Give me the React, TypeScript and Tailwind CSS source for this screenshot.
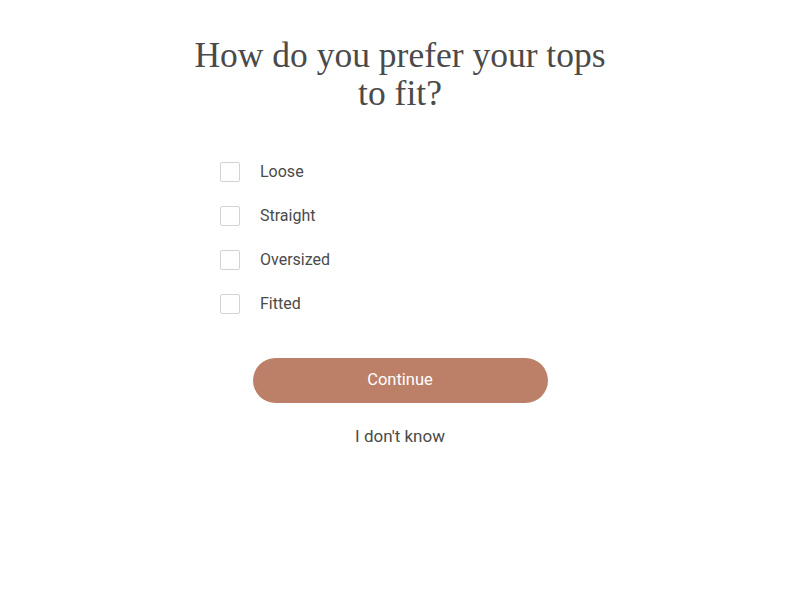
import React from "react";

const options = ["Loose", "Straight", "Oversized", "Fitted"];

export default function App() {
  return (
    <div className="min-h-[600px] w-full bg-white flex flex-col items-center text-[#4a4a4a]">
      <h1
        className="mt-[36px] w-[440px] text-center text-[35.5px] leading-[38px] text-[#4a4a4a]"
        style={{ fontFamily: '"Liberation Serif", serif' }}
      >
        How do you prefer your tops
        <br />
        to fit?
      </h1>
      <div
        className="mt-[50px] w-[360px] flex flex-col gap-[24px]"
        style={{ fontFamily: "Roboto, sans-serif" }}
      >
        {options.map((o) => (
          <label key={o} className="flex items-center h-[20px] cursor-pointer">
            <span className="w-[20px] h-[20px] border border-[#d3d3d3] rounded-[2px] bg-white" />
            <span className="ml-[20px] text-[16px] text-[#4a4a4a]">{o}</span>
          </label>
        ))}
      </div>
      <button
        className="mt-[44px] w-[295px] h-[45px] rounded-full bg-[#bc8068] text-white text-[16.5px]"
        style={{ fontFamily: "Roboto, sans-serif" }}
      >
        Continue
      </button>
      <button
        className="mt-[21px] text-[17px] text-[#4a4a4a]"
        style={{ fontFamily: "Roboto, sans-serif" }}
      >
        I don't know
      </button>
    </div>
  );
}
